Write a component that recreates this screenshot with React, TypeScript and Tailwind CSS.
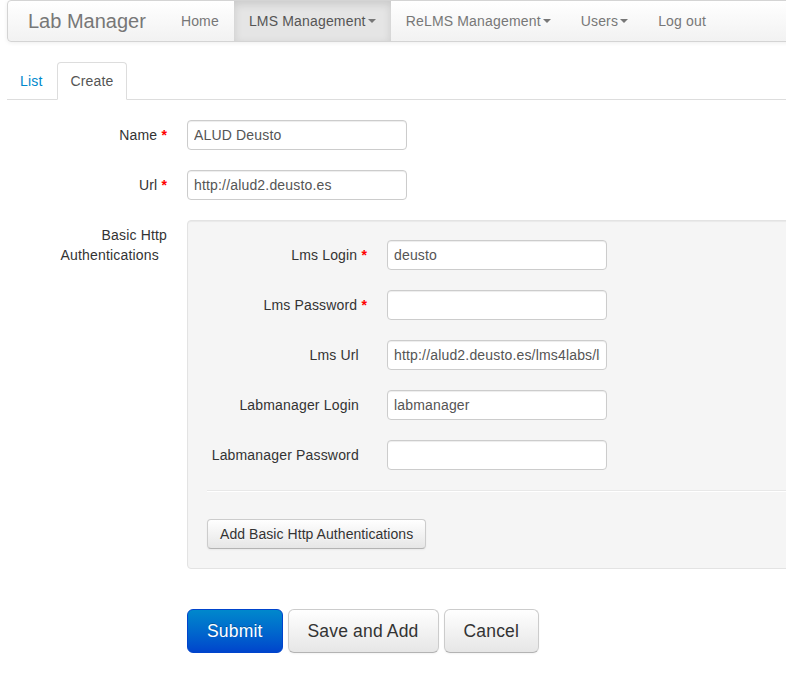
import React from "react";

const navItems = [
  { label: "Home", caret: false, active: false },
  { label: "LMS Management", caret: true, active: true },
  { label: "ReLMS Management", caret: true, active: false },
  { label: "Users", caret: true, active: false },
  { label: "Log out", caret: false, active: false },
];

const authFields = [
  { label: "Lms Login", value: "deusto", required: true },
  { label: "Lms Password", value: "", required: true },
  { label: "Lms Url", value: "http://alud2.deusto.es/lms4labs/labmanager/", required: false },
  { label: "Labmanager Login", value: "labmanager", required: false },
  { label: "Labmanager Password", value: "", required: false },
];

function Caret() {
  return (
    <span className="inline-block w-0 h-0 ml-[2px] mt-[8px] align-top border-t-[4px] border-t-[#777] border-x-[4px] border-x-transparent" />
  );
}

function Label({ text, required }: { text: string; required: boolean }) {
  return (
    <label className="w-[160px] shrink-0 pt-[5px] text-right">
      {text}{" "}
      {required ? <strong className="text-[#ff0000] font-bold">*</strong> : "\u00a0"}
    </label>
  );
}

function TextInput({ value }: { value: string }) {
  return (
    <input
      readOnly
      value={value}
      className="w-[220px] h-[30px] px-[6px] py-[4px] bg-white border border-[#ccc] rounded-[4px] text-[14px] leading-[20px] tracking-[0.17px] text-[#555] shadow-[inset_0_1px_1px_rgba(0,0,0,0.075)] outline-none"
    />
  );
}

function Row({ text, value, required }: { text: string; value: string; required: boolean }) {
  return (
    <div className="flex mb-[20px]">
      <Label text={text} required={required} />
      <div className="ml-[20px]">
        <TextInput value={value} />
      </div>
    </div>
  );
}

export default function App() {
  return (
    <div className="w-[786px] h-[681px] overflow-hidden bg-white font-['Liberation_Sans',Arial,sans-serif] text-[14px] leading-[20px] tracking-[0.17px] text-[#333]">
      <div className="ml-[7px] w-[940px]">
        {/* Navbar */}
        <div className="flex h-[42px] px-[20px] border border-[#d4d4d4] rounded-[4px] bg-gradient-to-b from-white to-[#f2f2f2] shadow-[0_1px_4px_rgba(0,0,0,0.065)] mb-[20px]">
          <div className="py-[10px] px-[20px] -ml-[20px] text-[20px] leading-[20px] tracking-normal text-[#777]">Lab Manager</div>
          <div className="flex">
            {navItems.map((item) => (
              <div
                key={item.label}
                className={`px-[15px] py-[10px] h-[40px] ${
                  item.active
                    ? "bg-[#e5e5e5] text-[#555] shadow-[inset_0_3px_8px_rgba(0,0,0,0.125)]"
                    : "text-[#777]"
                }`}
              >
                {item.label}
                {item.caret && <Caret />}
              </div>
            ))}
          </div>
        </div>

        {/* Tabs */}
        <div className="flex border-b border-[#ddd] mb-[20px]">
          <div className="px-[12px] py-[8px] mr-[2px] border border-transparent -mb-[1px] text-[#0088cc]">List</div>
          <div className="px-[12px] py-[8px] mr-[2px] border border-[#ddd] border-b-white rounded-t-[4px] -mb-[1px] bg-white text-[#555]">
            Create
          </div>
        </div>

        {/* Form */}
        <Row text="Name" value="ALUD Deusto" required />
        <Row text="Url" value="http://alud2.deusto.es" required />

        <div className="flex mb-[20px]">
          <label className="w-[160px] shrink-0 pt-[5px] text-right">
            Basic Http Authentications{" "}{"\u00a0"}
          </label>
          <div className="ml-[20px] flex-1 bg-[#f5f5f5] border border-[#e3e3e3] rounded-[4px] px-[19px] pt-[19px] pb-[19px] shadow-[inset_0_1px_1px_rgba(0,0,0,0.05)]">
            {authFields.map((f) => (
              <Row key={f.label} text={f.label} value={f.value} required={f.required} />
            ))}
            <div className="border-t border-t-[#e8e8e8] border-b border-b-white mb-[27px]" />
            <button className="h-[30px] px-[12px] py-[4px] text-[14px] leading-[20px] tracking-[0.06px] text-[#333] border border-[#ccc] border-b-[#b3b3b3] rounded-[4px] bg-gradient-to-b from-white to-[#e6e6e6] shadow-[inset_0_1px_0_rgba(255,255,255,0.2),0_1px_2px_rgba(0,0,0,0.05)] [text-shadow:0_1px_1px_rgba(255,255,255,0.75)]">
              Add Basic Http Authentications
            </button>
          </div>
        </div>

        {/* Actions */}
        <div className="flex gap-[5px] pl-[180px] pt-[20px]">
          <button className="h-[44px] px-[19px] text-[17.5px] leading-[20px] text-white border border-[#0044cc] rounded-[6px] bg-gradient-to-b from-[#0088cc] to-[#0044cc] [text-shadow:0_-1px_0_rgba(0,0,0,0.25)]">
            Submit
          </button>
          <button className="h-[44px] px-[19px] text-[17.5px] leading-[20px] text-[#333] border border-[#ccc] border-b-[#b3b3b3] rounded-[6px] bg-gradient-to-b from-white to-[#e6e6e6] shadow-[0_1px_2px_rgba(0,0,0,0.05)]">
            Save and Add
          </button>
          <button className="h-[44px] px-[19px] text-[17.5px] leading-[20px] text-[#333] border border-[#ccc] border-b-[#b3b3b3] rounded-[6px] bg-gradient-to-b from-white to-[#e6e6e6] shadow-[0_1px_2px_rgba(0,0,0,0.05)]">
            Cancel
          </button>
        </div>
      </div>
    </div>
  );
}
